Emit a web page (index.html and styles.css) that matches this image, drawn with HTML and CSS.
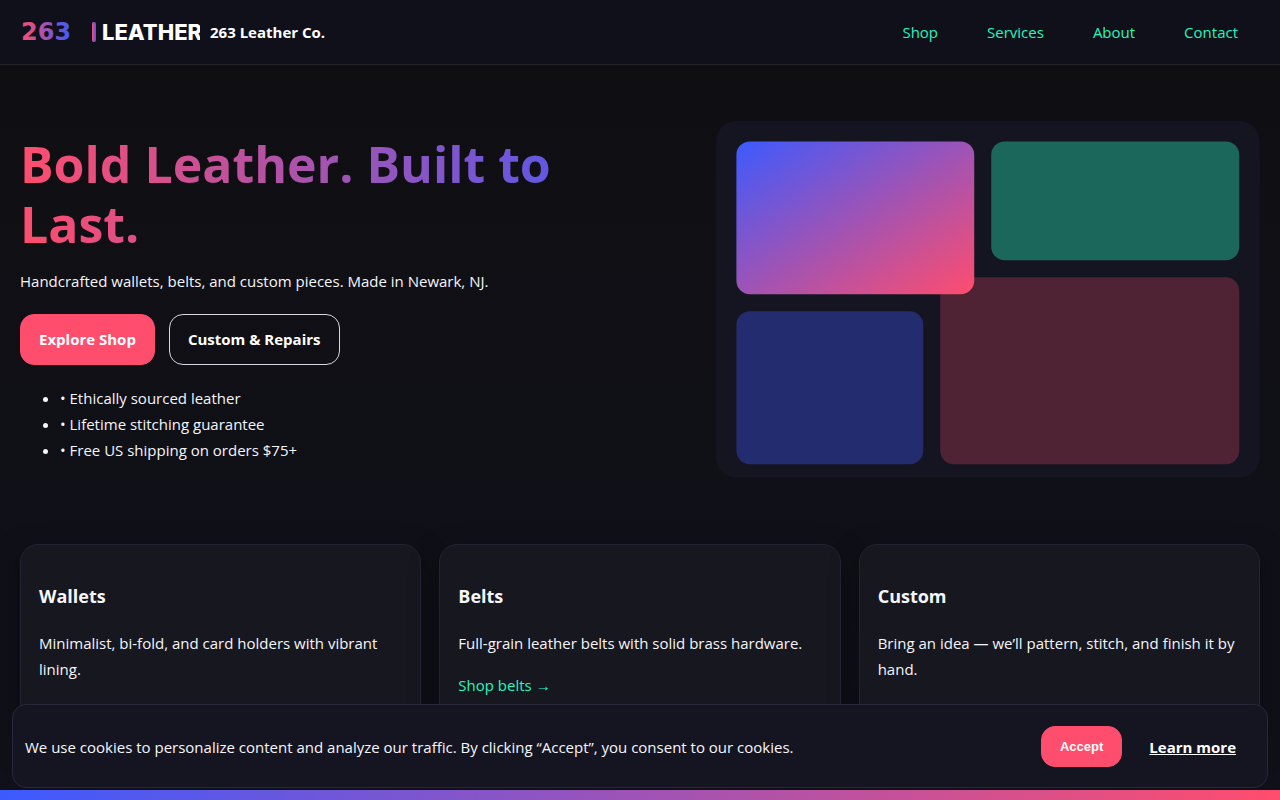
FILE: index.html
```html
<!DOCTYPE html>
<html lang="en">
<head>
<meta charset="utf-8">
<meta name="viewport" content="width=device-width, initial-scale=1">
<title>263 Leather Co.</title>
<link rel="stylesheet" href="styles.css">
</head>
<body>
<header class="site-header">
  <a class="brand" href="#">
    <svg class="logo" width="180" height="36" viewBox="0 0 180 36" aria-hidden="true">
      <defs>
        <linearGradient id="logo-grad" x1="0" y1="0" x2="1" y2="0">
          <stop offset="0" stop-color="#ff4d6d"/>
          <stop offset="1" stop-color="#3d5afe"/>
        </linearGradient>
      </defs>
      <text class="logo-number" x="1" y="26" fill="url(#logo-grad)">263</text>
      <rect x="72" y="8" width="4" height="20" rx="2" fill="url(#logo-grad)"/>
      <text class="logo-word" x="82" y="26" fill="#ffffff">LEATHER</text>
    </svg>
    <span class="brand-name">263 Leather Co.</span>
  </a>
  <nav class="nav">
    <a href="#">Shop</a>
    <a href="#">Services</a>
    <a href="#">About</a>
    <a href="#">Contact</a>
  </nav>
</header>
<main>
  <section class="hero">
    <div class="hero-copy">
      <h1 class="hero-title">Bold Leather. Built to Last.</h1>
      <p class="hero-lead">Handcrafted wallets, belts, and custom pieces. Made in Newark, NJ.</p>
      <div class="actions">
        <a class="btn btn-primary" href="#">Explore Shop</a>
        <a class="btn btn-ghost" href="#">Custom &amp; Repairs</a>
      </div>
      <ul class="perks">
        <li>• Ethically sourced leather</li>
        <li>• Lifetime stitching guarantee</li>
        <li>• Free US shipping on orders $75+</li>
      </ul>
    </div>
    <svg class="hero-art" viewBox="0 0 640 420" aria-hidden="true">
      <defs>
        <linearGradient id="art-grad" x1="0" y1="0" x2="1" y2="1">
          <stop offset="0" stop-color="#3d5afe"/>
          <stop offset="1" stop-color="#ff4d6d"/>
        </linearGradient>
      </defs>
      <rect width="640" height="420" rx="24" fill="#151522"/>
      <rect x="324" y="24" width="292" height="140" rx="16" fill="#26f5bd" opacity=".37"/>
      <rect x="24" y="224" width="220" height="180" rx="16" fill="#3d5afe" opacity=".35"/>
      <rect x="264" y="184" width="352" height="220" rx="16" fill="#ff4d6d" opacity=".25"/>
      <rect x="24" y="24" width="280" height="180" rx="16" fill="url(#art-grad)"/>
    </svg>
  </section>
  <section class="cards">
    <article class="card">
      <h3>Wallets</h3>
      <p>Minimalist, bi-fold, and card holders with vibrant lining.</p>
      <a href="#">Shop wallets →</a>
    </article>
    <article class="card">
      <h3>Belts</h3>
      <p>Full-grain leather belts with solid brass hardware.</p>
      <a href="#">Shop belts →</a>
    </article>
    <article class="card">
      <h3>Custom</h3>
      <p>Bring an idea — we’ll pattern, stitch, and finish it by hand.</p>
      <a href="#">Start a project →</a>
    </article>
  </section>
</main>
<div class="cookie" role="region" aria-label="Cookie notice">
  <p>We use cookies to personalize content and analyze our traffic. By clicking “Accept”, you consent to our cookies.</p>
  <div class="cookie-actions">
    <button class="btn btn-primary btn-small" type="button">Accept</button>
    <a class="learn" href="#">Learn more</a>
  </div>
</div>
<div class="stripe"></div>
</body>
</html>
```
FILE: styles.css
```css
:root {
  --pink: #ff4d6d;
  --blue: #3d5afe;
  --mint: #26f5bd;
  --panel: #151522;
  --line: #28283a;
}
* { box-sizing: border-box; }
body {
  margin: 0;
  min-height: 100vh;
  overflow: hidden;
  background: linear-gradient(#0f0f12, #10101a);
  color: #f5f5fa;
  font: 15px/26px "Segoe UI", "Open Sans", "Noto Sans", sans-serif;
}
.site-header {
  display: flex;
  align-items: center;
  justify-content: space-between;
  padding: 14px 20px;
  background: #10101a;
  border-bottom: 1px solid #242424;
}
.brand {
  display: flex;
  align-items: center;
  gap: 10px;
  color: #ffffff;
  text-decoration: none;
  font-weight: 700;
}
.logo { display: block; }
.logo-number { font: 700 24px "DejaVu Sans", sans-serif; }
.logo-word { font: 800 22px Inter, sans-serif; }
.nav { display: flex; gap: 5px; }
.nav a {
  padding: 0 22px;
  color: var(--mint);
  text-decoration: none;
}
.hero {
  display: grid;
  grid-template-columns: 1.2fr 1fr;
  gap: 44px;
  align-items: center;
  padding: 56px 20px;
}
.hero-copy { padding-bottom: 2px; }
.hero-title {
  margin: 0;
  background: linear-gradient(90deg, var(--pink), var(--blue));
  background-clip: text;
  -webkit-background-clip: text;
  color: transparent;
  font-size: 50px;
  line-height: 60px;
}
.hero-lead { margin: 14px 0 20px; }
.actions { display: flex; gap: 14px; }
.btn {
  padding: 12px 18px;
  border: 1px solid transparent;
  border-radius: 14px;
  color: #ffffff;
  font-weight: 700;
  line-height: 25px;
  text-decoration: none;
}
.btn-primary { background: var(--pink); border-color: var(--pink); }
.btn-ghost { border-color: #d8d8e4; }
.perks { margin: 20px 0 0; padding-left: 40px; }
.hero-art { display: block; width: 100%; }
.cards {
  display: grid;
  grid-template-columns: repeat(3, 1fr);
  gap: 18px;
  padding: 10px 20px;
}
.card {
  padding: 18px;
  background: #17171f;
  border: 1px solid #232333;
  border-radius: 18px;
  box-shadow: 0 10px 30px rgba(0, 0, 0, .35);
}
.card h3 { margin: 18px 0; font-size: 18px; line-height: 30px; }
.card p { margin: 19px 0 16px; }
.card a { color: var(--mint); text-decoration: none; }
.cookie {
  position: fixed;
  right: 12px;
  bottom: 12px;
  left: 12px;
  display: flex;
  align-items: center;
  justify-content: space-between;
  gap: 12px;
  padding: 21px 12px 20px;
  background: var(--panel);
  border: 1px solid var(--line);
  border-radius: 14px;
}
.cookie p { margin: 0; }
.cookie-actions { display: flex; align-items: center; gap: 8px; }
.btn-small { font: 700 13px/15px "Liberation Sans", Arial, sans-serif; }
.learn {
  padding: 0 19px;
  color: #ffffff;
  font-weight: 700;
}
.stripe {
  position: fixed;
  right: 0;
  bottom: 0;
  left: 0;
  height: 10px;
  background: linear-gradient(90deg, var(--blue), var(--pink));
}
```
